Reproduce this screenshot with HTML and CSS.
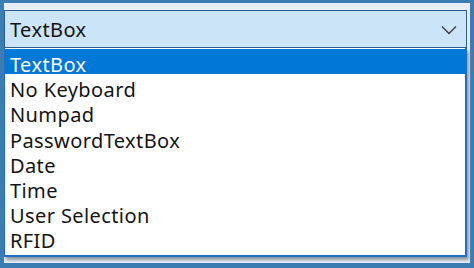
FILE: index.html
```html
<!DOCTYPE html>
<html>
<head>
<meta charset="utf-8">
<link rel="stylesheet" href="styles.css">
</head>
<body>
<div class="frame">
  <div class="panel">
    <div class="combo">
      <span class="value">TextBox</span>
      <svg class="chev" width="16" height="10" viewBox="0 0 16 10"><path d="M1 1.5 L8 8.5 L15 1.5" fill="none" stroke="#3a3f48" stroke-width="1.4"/></svg>
    </div>
    <div class="listwrap">
      <ul class="list">
        <li class="item selected">TextBox</li>
        <li class="item">No Keyboard</li>
        <li class="item">Numpad</li>
        <li class="item">PasswordTextBox</li>
        <li class="item">Date</li>
        <li class="item">Time</li>
        <li class="item">User Selection</li>
        <li class="item">RFID</li>
      </ul>
    </div>
  </div>
</div>
</body>
</html>
```
FILE: styles.css
```css
html, body {
  margin: 0;
  padding: 0;
  width: 474px;
  height: 268px;
  overflow: hidden;
  background: #3b7cb3;
  font-family: "Noto Sans", "Open Sans", sans-serif;
}
.frame {
  padding: 3px 4px 5px 4px;
  height: 268px;
  box-sizing: border-box;
}
.panel {
  background: #e8eef5;
  padding: 7px 3px 6px 0;
  height: 100%;
  box-sizing: border-box;
  display: flex;
  flex-direction: column;
}
.combo {
  height: 38px;
  box-sizing: border-box;
  border: 1px solid #2b5f94;
  background: #cce4f7;
  display: flex;
  align-items: center;
  justify-content: space-between;
  padding: 0 9px 0 5px;
  font-size: 20px;
  letter-spacing: 0.4px;
  color: #141414;
}
.chev { display: block; margin-top: 2px; }
.listwrap {
  flex: 1;
  background: #fff;
  padding-top: 1px;
  box-shadow: 2px 3px 3px #8f979f;
  border-right: 2px solid #1f6fc2;
  border-left: 1px solid #1f6fc2;
  border-bottom: 2px solid #1f6fc2;
}
.list {
  list-style: none;
  margin: 0;
  padding: 0;
}
.item {
  height: 25.2px;
  box-sizing: border-box;
  padding: 7px 0 0 5px;
  line-height: 18.2px;
  font-size: 20px;
  letter-spacing: 0.4px;
  color: #141414;
}
.item.selected {
  background: #0078d7;
  color: #fff;
}
```
